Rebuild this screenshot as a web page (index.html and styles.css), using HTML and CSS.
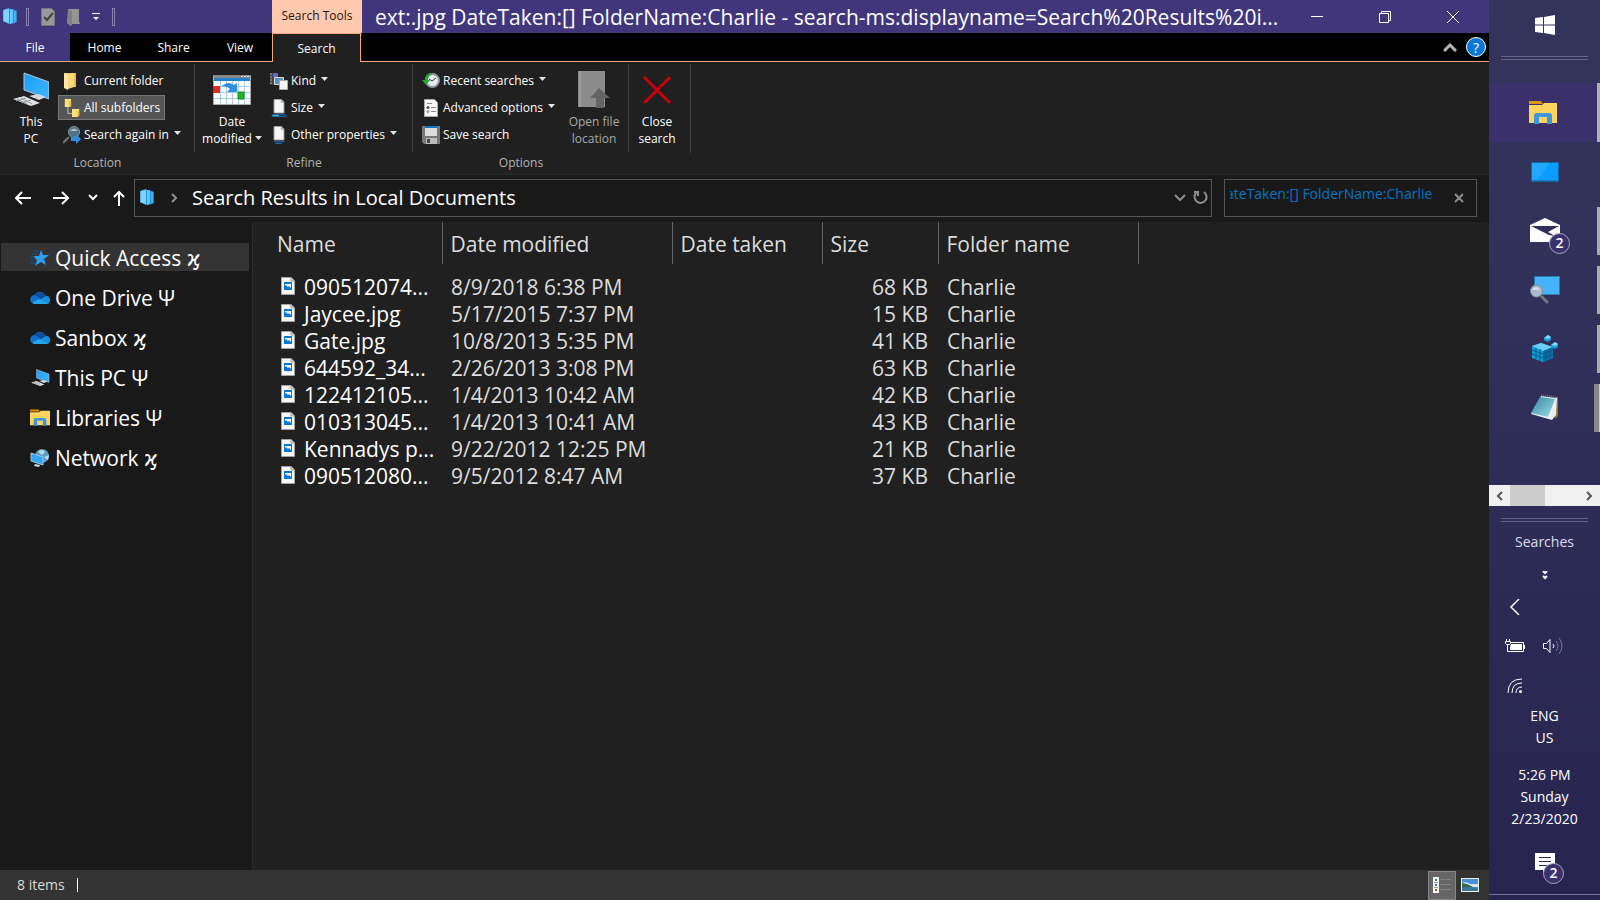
FILE: index.html
```html
<!DOCTYPE html>
<html lang="en">
<head>
<meta charset="UTF-8" />
<meta name="viewport" content="width=device-width, initial-scale=1" />
<title>Search Results in Local Documents</title>
<link rel="stylesheet" href="styles.css">
</head>
<body>

<!-- shared icons -->
<svg class="defs" aria-hidden="true">
  <defs>
    <linearGradient id="sky" x1="0" y1="0" x2="1" y2="1">
      <stop offset="0" stop-color="#18a0fb" /><stop offset="1" stop-color="#42b4ff" />
    </linearGradient>
    <linearGradient id="glass" x1="0" y1="0" x2="1" y2="1">
      <stop offset="0" stop-color="#2d88a4" /><stop offset="1" stop-color="#a5dce4" />
    </linearGradient>
  </defs>
  <symbol id="search-folder" viewBox="0 0 16 18">
    <path d="M1 2 7 0l1 1 3 0 1 1 3 1v12l-3 1-1 0-4 1-6-3z" fill="#3fb2ef" />
    <path d="M1 2 7 1v15l-6-2z" fill="#7cd4ff" />
    <path d="M7 1l1 0v16l-1 0zM11 1l1 1v15l-1 0z" fill="#1c8fd4" />
    <path d="M8 1l3 1v14l-3 1z" fill="#66c8fc" />
  </symbol>
  <symbol id="image-file" viewBox="0 0 14 18">
    <path d="M.5.5h9.500l3.500 3.500v13.500H.5z" fill="#f8f8f8" stroke="#a4a4a4" />
    <path d="M10 .5v3.500h3.500" fill="#ddd" stroke="#999" />
    <path d="M3 5h8v8H3z" fill="#0878d8" />
    <path d="M4 7h6v4l-2-2-1 1-2-2-1 1z" fill="#fff" />
  </symbol>
  <symbol id="cloud" viewBox="0 0 20 14">
    <path d="M5 13a4.500 4.500 0 0 1-.5-9A6.500 6.500 0 0 1 16 5a4 4 0 0 1-1 8z" fill="#0f6fc9" />
    <path d="M5 4a6.500 6.500 0 0 1 11 1L11 8z" fill="#0a4f9e" />
    <path d="M3 13l8-5 5-3a4 4 0 0 1 0 8z" fill="#1490df" />
    <path d="M2 12l7-4 9 5H5z" fill="#29a7ea" />
  </symbol>
  <symbol id="computer" viewBox="0 0 36 36">
    <path d="M11 1l25 9v17L11 18z" fill="url(#sky)" stroke="#b9c4cb" />
    <path d="M16 24l9-2 8 3-7 3z" fill="#d3dadd" />
    <path d="M0 27l11-3 16 7-9 3z" fill="#dfe3e6" />
    <path d="M4 27l10 5M8 26l11 6M3 29l10-3M9 31l9-3" stroke="#8f979c" />
  </symbol>
  <symbol id="libraries" viewBox="0 0 28 24">
    <path d="M0 0h12l2 3H0z" fill="#dd9706" />
    <path d="M0 4h13l2-2h13v20H0z" fill="#ffd45e" />
    <path d="M5 23v-8q0-3 3-3h12q3 0 3 3v8h-5v-7h-8v7z" fill="#3c97dc" />
  </symbol>
  <symbol id="page" viewBox="0 0 18 20">
    <path d="M3.500 1.500h8l3 3v12h-11z" fill="#f5f5f5" stroke="#aaa" />
    <path d="M11.500 1.500v3h3" fill="#ccc" stroke="#999" />
  </symbol>
  <symbol id="down" viewBox="0 0 7 4"><path d="M0 0h7L3.500 4z" fill="#e4e4e4" /></symbol>
</svg>

<main class="window">
  <header class="titlebar">
    <div class="quick-bar">
      <svg class="i16"><use href="#search-folder" /></svg>
      <span class="grip"></span>
      <button aria-label="Properties">
        <svg width="14" height="18" viewBox="0 0 14 18"><path d="M.5.5h10l3 3v14H.5z" fill="#989898" stroke="#777" /><path d="M3 9l3 3 6-7" fill="none" stroke="#444" stroke-width="2" /></svg>
      </button>
      <button aria-label="New folder">
        <svg width="13" height="18" viewBox="0 0 13 18"><path d="M1 1h11v12l1 3-8 0-1 2-4-3z" fill="#959595" /><path d="M1 1l4 2v14l-4-2z" fill="#808080" /></svg>
      </button>
      <button aria-label="Customize">
        <svg width="8" height="8" viewBox="0 0 8 8"><path d="M0 0h8v1H0zM1 4h6L4 7z" fill="#fff" /></svg>
      </button>
      <span class="grip"></span>
    </div>
    <div class="tools-tab">Search Tools</div>
    <h1>ext:.jpg DateTaken:[] FolderName:Charlie - search-ms:displayname=Search%20Results%20i...</h1>
    <div class="window-buttons">
      <button aria-label="Minimize"><svg width="12" height="12" viewBox="0 0 12 12"><path d="M0 5.500h12" stroke="#fff" /></svg></button>
      <button aria-label="Restore"><svg width="12" height="12" viewBox="0 0 12 12" fill="none" stroke="#fff"><path d="M.5 2.500h9v9h-9zM2.500 2.500v-2h9v9h-2" /></svg></button>
      <button aria-label="Close"><svg width="12" height="12" viewBox="0 0 12 12"><path d="M0 0l12 12M12 0 0 12" stroke="#fff" /></svg></button>
    </div>
  </header>

  <nav class="tabs">
    <button class="file">File</button>
    <button class="home">Home</button>
    <button>Share</button>
    <button>View</button>
    <button class="active">Search</button>
    <div class="tab-end">
      <button aria-label="Collapse ribbon"><svg width="14" height="9" viewBox="0 0 14 9"><path d="M1 8l6-6 6 6" fill="none" stroke="#b5b5b5" stroke-width="3" /></svg></button>
      <button class="help" aria-label="Help">?</button>
    </div>
  </nav>

  <section class="ribbon">
    <div class="group location">
      <div class="group-body">
        <button class="big">
          <svg width="36" height="36"><use href="#computer" /></svg>
          <span>This<br>PC</span>
        </button>
        <div class="stack">
          <button>
            <svg class="i18" viewBox="0 0 18 18"><path d="M1 1h12v14H5z" fill="#e9bd54" /><path d="M1 1l4 1v16l-4-2z" fill="#ffe9a3" /><path d="M5 2l6-1v14l-6 2z" fill="#fbd878" /></svg>
            Current folder
          </button>
          <button class="selected">
            <svg class="i18" viewBox="0 0 18 20"><path d="M4.500 9v7h5" fill="none" stroke="#ccc" /><path d="M1 0h7v8l-2 1H1zM9 11h8v7l-2 2H9z" fill="#ffe07c" /><path d="M6 2h2v6l-2 1zM15 13h2v6l-2 1z" fill="#e8b744" /></svg>
            All subfolders
          </button>
          <button>
            <svg class="i18" viewBox="0 0 18 18"><path d="M0 17l6-6" stroke="#777" stroke-width="2" /><circle cx="11" cy="6" r="5.500" fill="#4e7186" stroke="#8796a0" /><path d="M7 5q4-5 8 0" fill="#a9bdc8" /><path d="M8 11h5V8l5 5-5 5v-3H8z" fill="#2d8fe0" /></svg>
            Search again in <svg class="caret"><use href="#down" /></svg>
          </button>
        </div>
      </div>
      <p>Location</p>
    </div>

    <div class="group refine">
      <div class="group-body">
        <button class="big">
          <svg width="38" height="36" viewBox="0 0 38 36"><path d="M.5 3.500h37v29H.5z" fill="#fff" stroke="#aaa" /><path d="M1 3h36v3H1z" fill="#888" /><path d="M1 6h36v3H1z" fill="#2382ce" /><path d="M7.500 9v23M13.500 9v23M19.500 9v23M25.500 9v23M31.500 9v23M1 14.500h36M1 20.500h36M1 26.500h36" stroke="#a6cde6" /><path d="M0 14h7v7H0z" fill="#df2b22" /><path d="M25 20h6v7h-6z" fill="#1eb92b" stroke="#128c1b" /><path d="M8 15q7-7 13-2l3-2v9h-10l3-3q-4-4-9-2z" fill="#2f8fe0" /><path d="M28 4h2v1h-2zM31 4h2v1h-2zM34 4h2v1h-2z" fill="#eee" /></svg>
          <span>Date<br>modified <svg class="caret"><use href="#down" /></svg></span>
        </button>
        <div class="stack">
          <button>
            <svg class="i18" viewBox="0 0 18 18"><path d="M0 1h8v12H0z" fill="#3e4247" /><path d="M0 2h2M0 5h2M0 8h2M0 11h2" stroke="#aaa" /><path d="M3 1h5v4H3z" fill="#5968c8" /><path d="M4.500 5.500h9v7h-9z" fill="#5a91c1" stroke="#ddd" /><path d="M9.500 8.500h8v9h-8z" fill="#f4f4f4" stroke="#aaa" /></svg>
            Kind <svg class="caret"><use href="#down" /></svg>
          </button>
          <button>
            <svg class="i18" viewBox="0 0 18 20"><path d="M3.500.5h8l3 3v12h-11z" fill="#f5f5f5" stroke="#aaa" /><path d="M11.500.5v3h3" fill="#ccc" stroke="#999" /><path d="M1.500 17.500h15v2h-15z" fill="#123" stroke="#0a78d0" /><path d="M2 18h7v1H2z" fill="#7cc" /></svg>
            Size <svg class="caret"><use href="#down" /></svg>
          </button>
          <button>
            <svg class="i18" viewBox="0 0 18 20"><path d="M3.500.5h8l3 3v12h-11z" fill="#f5f5f5" stroke="#aaa" /><path d="M11.500.5v3h3" fill="#ccc" stroke="#999" /><path d="M3 17.500h12M5 19.500h7" stroke="#1680d6" /></svg>
            Other properties <svg class="caret"><use href="#down" /></svg>
          </button>
        </div>
      </div>
      <p>Refine</p>
    </div>

    <div class="group options">
      <div class="group-body">
        <div class="stack">
          <button>
            <svg class="i18" viewBox="0 0 18 18"><circle cx="10.500" cy="8.500" r="6.500" fill="#e9edef" stroke="#8a979e" stroke-width="2" /><path d="M7 7l3 2 4-3" stroke="#333" fill="none" /><path d="M10 1Q3 1 3 8H0l4 5 4-5H6q0-4 4-6z" fill="#29a63a" /></svg>
            Recent searches <svg class="caret"><use href="#down" /></svg>
          </button>
          <button>
            <svg class="i18" viewBox="0 0 18 18"><path d="M2.500.5h10l3 3v14h-13z" fill="#fafafa" stroke="#aaa" /><path d="M5 4.500h5M9 8.500h5M9 12.500h5" stroke="#888" /><circle cx="6" cy="8.500" r="1.500" fill="#555" /><circle cx="6" cy="12.500" r="1" fill="none" stroke="#777" /></svg>
            Advanced options <svg class="caret"><use href="#down" /></svg>
          </button>
          <button>
            <svg class="i18" viewBox="0 0 18 18"><path d="M0 0h18v18H2l-2-2z" fill="#777" /><path d="M3 0h12v10H3z" fill="#ddd" /><path d="M3 0h12v2H3z" fill="#0878d0" /><path d="M4 12h11v6H4z" fill="#bbb" /><path d="M5 13h3v4H5z" fill="#444" /></svg>
            Save search
          </button>
        </div>
        <button class="big" disabled>
          <svg width="32" height="38" viewBox="0 0 32 38"><path d="M0 0h27v36H0z" fill="#8c8c8c" /><path d="M2 0v36" stroke="#aaa" /><path d="M21 17l11 10h-6v10h-8V27h-6z" fill="#646464" /></svg>
          <span>Open file<br>location</span>
        </button>
      </div>
      <p>Options</p>
    </div>

    <div class="group close">
      <div class="group-body">
        <button class="big">
          <svg width="30" height="36" viewBox="0 0 30 36"><path d="M2 5l26 26M28 5 2 31" stroke="#c8000c" stroke-width="3" /></svg>
          <span>Close<br>search</span>
        </button>
      </div>
    </div>
  </section>

  <section class="address-row">
    <button aria-label="Back"><svg width="16" height="14" viewBox="0 0 16 14"><path d="M16 7H2M7 1 1 7l6 6" /></svg></button>
    <button aria-label="Forward"><svg width="16" height="14" viewBox="0 0 16 14"><path d="M0 7h14M9 1l6 6-6 6" /></svg></button>
    <button class="narrow" aria-label="Recent locations"><svg width="10" height="7" viewBox="0 0 10 7"><path d="M1 1l4 4 4-4" /></svg></button>
    <button class="narrow" aria-label="Up"><svg width="12" height="16" viewBox="0 0 12 16"><path d="M6 16V2M1 7l5-5 5 5" /></svg></button>
    <div class="address">
      <svg class="i16"><use href="#search-folder" /></svg>
      <svg class="crumb" width="6" height="10" viewBox="0 0 6 10"><path d="M1 1l4 4-4 4" /></svg>
      <span>Search Results in Local Documents</span>
      <button aria-label="Previous locations"><svg width="12" height="8" viewBox="0 0 12 8"><path d="M1 1l5 5 5-5" /></svg></button>
      <button aria-label="Refresh"><svg width="15" height="15" viewBox="0 0 15 15"><path d="M3 3a6 6 0 1 0 8-1M1 2h4v4" /></svg></button>
    </div>
    <div class="search-box">
      <input type="text" aria-label="Search" value="ateTaken:[] FolderName:Charlie">
      <button aria-label="Clear search"><svg width="10" height="10" viewBox="0 0 10 10"><path d="M1 1l8 8M9 1 1 9" /></svg></button>
    </div>
  </section>

  <div class="content">
    <aside class="nav-pane">
      <a href="#" class="current"><svg class="i20" viewBox="0 0 20 18"><path d="M11 1l2 5 6 0-5 4 2 6-5-3-6 4 2-6-4-4h6z" fill="#2b9df0" /><path d="M3 2h6M1 5h7M0 8h5M1 11h5M0 14h5" stroke="#14547f" /></svg><span>Quick Access <span class="kai">ϗ</span></span></a>
      <a href="#"><svg class="i20"><use href="#cloud" /></svg>One Drive Ψ</a>
      <a href="#"><svg class="i20"><use href="#cloud" /></svg><span>Sanbox <span class="kai">ϗ</span></span></a>
      <a href="#"><svg class="i20"><use href="#computer" /></svg>This PC Ψ</a>
      <a href="#"><svg class="i20"><use href="#libraries" /></svg>Libraries Ψ</a>
      <a href="#"><svg class="i20" viewBox="0 0 20 18"><circle cx="12" cy="7" r="7" fill="#5b9fbe" /><path d="M8 3q4-4 7 0l-3 3zM14 8l5-2-1 5z" fill="#b8dce6" /><path d="M1 4l12 4v8L1 12z" fill="#35a5f5" stroke="#9cc4da" /><path d="M5 15l5 1-1 2-5-1z" fill="#cfd8dd" /></svg><span>Network <span class="kai">ϗ</span></span></a>
    </aside>

    <div class="files">
      <table>
        <colgroup>
          <col class="c-name"><col class="c-modified"><col class="c-taken"><col class="c-size"><col class="c-folder">
        </colgroup>
        <thead>
          <tr><th>Name</th><th>Date modified</th><th>Date taken</th><th>Size</th><th>Folder name</th></tr>
        </thead>
        <tbody>
          <tr><td><svg><use href="#image-file" /></svg>090512074...</td><td>8/9/2018 6:38 PM</td><td></td><td>68 KB</td><td>Charlie</td></tr>
          <tr><td><svg><use href="#image-file" /></svg>Jaycee.jpg</td><td>5/17/2015 7:37 PM</td><td></td><td>15 KB</td><td>Charlie</td></tr>
          <tr><td><svg><use href="#image-file" /></svg>Gate.jpg</td><td>10/8/2013 5:35 PM</td><td></td><td>41 KB</td><td>Charlie</td></tr>
          <tr><td><svg><use href="#image-file" /></svg>644592_34...</td><td>2/26/2013 3:08 PM</td><td></td><td>63 KB</td><td>Charlie</td></tr>
          <tr><td><svg><use href="#image-file" /></svg>122412105...</td><td>1/4/2013 10:42 AM</td><td></td><td>42 KB</td><td>Charlie</td></tr>
          <tr><td><svg><use href="#image-file" /></svg>010313045...</td><td>1/4/2013 10:41 AM</td><td></td><td>43 KB</td><td>Charlie</td></tr>
          <tr><td><svg><use href="#image-file" /></svg>Kennadys p...</td><td>9/22/2012 12:25 PM</td><td></td><td>21 KB</td><td>Charlie</td></tr>
          <tr><td><svg><use href="#image-file" /></svg>090512080...</td><td>9/5/2012 8:47 AM</td><td></td><td>37 KB</td><td>Charlie</td></tr>
        </tbody>
      </table>
    </div>
  </div>

  <footer class="statusbar">
    <span class="count">8 items</span>
    <div class="views">
      <button class="on" aria-label="Details"><svg width="18" height="16" viewBox="0 0 18 16"><path d="M0 0h6v16H0z" fill="#f4f4f4" /><path d="M1 5.500h4M1 10.500h4" stroke="#999" /><path d="M2 2h2v2H2z" fill="#387" /><path d="M2 7h2v2H2z" fill="#37b" /><path d="M2 12h2v2H2z" fill="#c32" /><path d="M7 2.500h5M13 2.500h5M7 7.500h5M13 7.500h5M7 12.500h5M13 12.500h5" stroke="#858585" /></svg></button>
      <button aria-label="Large icons"><svg width="18" height="14" viewBox="0 0 18 14"><path d="M0 0h18v14H0z" fill="#eee" /><path d="M1 1h16v12H1z" fill="#4a90d8" /><path d="M1 5q4-2 8 1l8 0v3H1z" fill="#d2e8f5" /><path d="M1 5l5 1 6 3-11 1z" fill="#326b4b" /><path d="M1 10q8-2 16 0v3H1z" fill="#387994" /></svg></button>
    </div>
  </footer>
</main>

<aside class="taskbar">
  <button class="start" aria-label="Start"><svg width="20" height="20" viewBox="0 0 20 20" fill="#fff"><path d="M0 3l8-1v7.500H0zM9 2l11-2v9.500H9zM0 10.500h8V18l-8-1zM9 10.500h11V20L9 18z" /></svg></button>
  <hr>
  <div class="apps">
    <button class="active" aria-label="File Explorer"><svg width="28" height="24"><use href="#libraries" /></svg></button>
    <button aria-label="Desktop"><svg width="28" height="20" viewBox="0 0 28 20"><path d="M.5.5h27v19H.5z" fill="#0a9cff" stroke="#1468a0" /><path d="M1 1h18L6 18H1z" fill="#22a8ff" /><path d="M1 18.500h26" stroke="#1878b5" /></svg></button>
    <button class="open" aria-label="Mail, 2 new">
      <svg width="30" height="26" viewBox="0 0 30 26"><path d="M0 7 15 0l15 7v17H0z" fill="#fff" /><path d="M1 8h28L18 14l7 4-6-1z" fill="#302f58" /></svg>
      <span class="badge">2</span>
    </button>
    <button class="open" aria-label="Search"><svg width="30" height="28" viewBox="0 0 30 28"><path d="M4.500.5h25v18h-25z" fill="#45b3fa" stroke="#277da7" /><path d="M11 20l7 7" stroke="#777" stroke-width="3" /><circle cx="6.500" cy="15" r="6" fill="#adb9ce" stroke="#7f8a98" /><path d="M2 14q4-6 8 0" fill="#d8deea" /></svg></button>
    <button class="open" aria-label="Registry Editor"><svg width="26" height="28" viewBox="0 0 26 28"><path d="M0 11l9-3 12 4v11l-10 4-11-4z" fill="#139ad2" /><path d="M0 11l9-3 12 4-10 4z" fill="#69cef3" /><path d="M11 16l10-4v11l-10 4z" fill="#0b6ea8" /><path d="M0 15l11 4 10-4M0 19l11 4 10-4M4 13v11M8 14v12M14 15v11M18 13v11" stroke="#0a5788" fill="none" /><path d="M12 3l4-3 3 2v3l-3 2-4-2zM19 10l4-3 3 2v3l-3 2-4-2z" fill="#2299d4" /><path d="M12 3l4-3 3 2-3 2zM19 10l4-3 3 2-3 2z" fill="#7ad9f8" /></svg></button>
    <button class="open many" aria-label="Notepad"><svg width="28" height="27" viewBox="0 0 28 27"><path d="M25 3h2v19l-3 3z" fill="#9a7130" /><path d="M10 2l16 2-1 17-4 5L0 20z" fill="#e5f0ef" /><path d="M9 3l15 2-7 18L0 19z" fill="url(#glass)" /><path d="M10 1l16 2" stroke="#666" stroke-width="2" stroke-dasharray="1 1" /></svg></button>
  </div>
  <div class="scroller">
    <button aria-label="Scroll left"><svg width="7" height="10" viewBox="0 0 7 10"><path d="M6 1 2 5l4 4" /></svg></button>
    <span class="thumb"></span>
    <button aria-label="Scroll right"><svg width="7" height="10" viewBox="0 0 7 10"><path d="M1 1l4 4-4 4" /></svg></button>
  </div>
  <hr>
  <div class="toolbar-name">Searches</div>
  <button class="more" aria-label="More"><svg width="6" height="9" viewBox="0 0 6 9"><path d="M1 0l2 2 2-2M1 5l2 2 2-2" fill="none" stroke="#fff" stroke-width="2" /></svg></button>
  <div class="tray">
    <button aria-label="Hidden icons"><svg width="20" height="16" viewBox="0 0 20 16"><path d="M14 0 6 8l8 8" stroke-width="1.500" /></svg></button>
    <span></span>
    <button aria-label="Battery"><svg width="20" height="14" viewBox="0 0 20 14"><path d="M6 3.500h12.500v9h-16V8" /><path d="M6 5h11v6H5V8z" fill="#fff" stroke="none" /><path d="M19.500 6v4M1.500 0v2M4.500 0v2M.5 2.500h5v2l-1 1h-3l-1-1zM2.500 6v6" /></svg></button>
    <button aria-label="Volume"><svg width="20" height="18" viewBox="0 0 20 18"><path d="M.5 6.500h3l3.500-4v13l-3.500-4h-3z" /><path d="M10 7q2 2 0 4" /><path d="M13 4q4 5 0 10M16 1q6 8 0 16" stroke="#77759b" /></svg></button>
    <button aria-label="Network"><svg width="16" height="16" viewBox="0 0 16 16"><path d="M1 15Q1 1 15 1M5 15Q5 5 15 5M9 15q0-6 6-6" /><circle cx="13.500" cy="13.500" r="1.500" fill="#fff" stroke="none" /></svg></button>
  </div>
  <div class="lang">ENG<br>US</div>
  <div class="clock">5:26 PM<br>Sunday<br>2/23/2020</div>
  <button class="action-center" aria-label="Notifications, 2 new">
    <svg width="20" height="20" viewBox="0 0 20 20"><path d="M0 0h20v17h-9l-3 3v-3H0z" fill="#fff" /><path d="M4 4.500h12M4 8.500h12M4 12.500h9" stroke="#2a2950" /></svg>
    <span class="badge">2</span>
  </button>
</aside>

</body>
</html>
```
FILE: styles.css
```css
* {
  box-sizing: border-box;
}
body {
  margin: 0;
  display: flex;
  height: 100vh;
  overflow: hidden;
  font-family: "Open Sans", "Noto Sans", "DejaVu Sans", sans-serif;
  font-size: 12px;
  color: #fff;
  background: #202020;
}
button {
  font: inherit;
  color: inherit;
  background: none;
  border: none;
  padding: 0;
  display: flex;
  align-items: center;
  justify-content: center;
}
svg {
  flex: none;
}
.defs {
  position: absolute;
  width: 0;
  height: 0;
}
.i16 {
  width: 16px;
  height: 17px;
}
.i18 {
  width: 18px;
  height: 18px;
}
.i20 {
  width: 20px;
  height: 18px;
}
.caret {
  width: 7px;
  height: 4px;
}

.window {
  flex: 1;
  min-width: 0;
  display: flex;
  flex-direction: column;
}

/* title bar */
.titlebar {
  display: flex;
  height: 33px;
  padding-right: 2px;
  background: #41367c;
}
.quick-bar {
  width: 272px;
  display: flex;
  align-items: center;
  gap: 12px;
  padding-left: 2px;
}
.quick-bar .i16 {
  margin-right: -4px;
}
.grip {
  width: 3px;
  height: 18px;
  border: 1px solid #8881ae;
}
.tools-tab {
  width: 90px;
  background: #ffc9ae;
  color: #1c1410;
  text-align: center;
  line-height: 31px;
}
.titlebar h1 {
  flex: 1;
  margin: 0;
  padding-left: 13px;
  font-size: 21px;
  font-weight: 400;
  line-height: 34px;
  white-space: nowrap;
  overflow: hidden;
}
.window-buttons {
  display: flex;
}
.window-buttons button {
  width: 68px;
}

/* ribbon tabs */
.tabs {
  display: flex;
  height: 29px;
  background: #000;
}
.tabs button {
  width: 64px;
  border-bottom: 1px solid #f7a67c;
}
.tabs .file {
  width: 70px;
  background: #41367c;
}
.tabs .home {
  width: 69px;
}
.tabs .home + button {
  width: 69px;
}
.tabs .active {
  width: 89px;
  background: #202020;
  border: 1px solid #f7a67c;
  border-bottom: none;
}
.tab-end {
  flex: 1;
  display: flex;
  justify-content: flex-end;
  align-items: center;
  gap: 9px;
  padding-right: 3px;
  border-bottom: 1px solid #f7a67c;
}
.tab-end button {
  width: auto;
  border: none;
}
.tab-end .help {
  width: 20px;
  height: 20px;
  border: 1px solid #fff;
  border-radius: 50%;
  background: #0878d7;
  font-size: 14px;
}

/* ribbon */
.ribbon {
  display: flex;
  height: 113px;
  border-bottom: 1px solid #2b2b2b;
}
.group {
  display: flex;
  flex-direction: column;
  padding-top: 2px;
}
.group-body {
  display: flex;
  height: 89px;
  padding: 4px 0 0 4px;
  border-right: 1px solid #414141;
}
.group p {
  margin: 0;
  line-height: 22px;
  text-align: center;
  color: #b4b4b4;
}
.location {
  width: 195px;
}
.refine {
  width: 218px;
}
.options {
  width: 216px;
}
.close {
  width: 62px;
}
.close .group-body {
  padding-left: 1px;
}
.stack {
  display: flex;
  flex-direction: column;
  align-items: flex-start;
  gap: 2px;
}
.stack button {
  height: 25px;
  padding: 0 4px;
  gap: 3px;
  border: 1px solid transparent;
  white-space: nowrap;
}
.stack .caret {
  margin: 0 0 3px 2px;
}
.stack .selected {
  background: #555;
  border-color: #777;
}
.big {
  width: 54px;
  flex-direction: column;
  justify-content: flex-start;
  gap: 4px;
  padding-top: 3px;
  line-height: 17px;
  white-space: nowrap;
}
.big > svg {
  height: 38px;
}
.refine .big {
  width: 66px;
}
.options .big {
  margin-left: auto;
  width: 76px;
  color: #a8a8a8;
}
.big .caret {
  margin-bottom: 3px;
}

/* address row */
.address-row {
  display: flex;
  align-items: center;
  height: 47px;
  padding: 0 12px 2px 4px;
  background: #191919;
}
.address-row button {
  width: 38px;
}
.address-row .narrow {
  width: 26px;
}
.address-row path {
  fill: none;
  stroke: #fff;
  stroke-width: 2;
}
.address,
.search-box {
  display: flex;
  align-items: center;
  height: 38px;
  border: 1px solid #555;
}
.address {
  flex: 1;
  margin: 0 12px 0 2px;
  padding-left: 4px;
  font-size: 20px;
}
.address span {
  flex: 1;
  margin-left: 15px;
}
.address .crumb {
  margin-left: 16px;
}
.address button {
  width: 21px;
}
.address .crumb path,
.address button path,
.search-box path {
  stroke: #8f8f8f;
}
.search-box {
  width: 253px;
}
.search-box input {
  flex: 1;
  min-width: 0;
  margin: 0 0 8px 5px;
  padding: 0;
  border: none;
  background: none;
  color: #0873c4;
  font: inherit;
  font-size: 14px;
  text-indent: -4px;
}
.search-box button {
  width: 34px;
}

/* navigation pane */
.content {
  flex: 1;
  min-height: 0;
  display: flex;
}
.nav-pane {
  width: 253px;
  padding: 21px 3px 0 1px;
  background: #191919;
  border-right: 1px solid #2b2b2b;
}
.nav-pane a {
  display: flex;
  align-items: center;
  gap: 5px;
  height: 28px;
  margin-bottom: 12px;
  padding: 2px 0 0 29px;
  color: #fff;
  font-size: 21px;
  text-decoration: none;
}
.nav-pane .current {
  background: #333;
}
.kai {
  font-family: "DejaVu Sans", sans-serif;
}

/* file list */
.files {
  flex: 1;
  padding-left: 16px;
}
table {
  table-layout: fixed;
  width: 869px;
  border-collapse: collapse;
  font-size: 21px;
  color: #dcdcdc;
}
.c-name { width: 173px; }
.c-modified { width: 230px; }
.c-taken { width: 150px; }
.c-size { width: 116px; }
.c-folder { width: 200px; }
th {
  height: 42px;
  padding: 2px 8px 0;
  font-weight: 400;
  text-align: left;
  border-right: 1px solid #636363;
}
tbody::before {
  content: "";
  display: block;
  height: 10px;
}
td {
  height: 27px;
  padding: 0 9px;
  line-height: 27px;
  white-space: nowrap;
}
td:first-child {
  color: #fff;
}
td:nth-child(4) {
  text-align: right;
  padding-right: 10px;
}
td svg {
  width: 14px;
  height: 18px;
  margin: 0 9px 0 3px;
}

/* status bar */
.statusbar {
  display: flex;
  justify-content: space-between;
  align-items: center;
  height: 30px;
  padding: 0 5px 0 17px;
  background: #333;
  font-size: 14px;
}
.count {
  padding-right: 12px;
  border-right: 1px solid #fff;
  line-height: 14px;
  color: #dcdcdc;
}
.views {
  display: flex;
}
.views button {
  width: 28px;
  height: 29px;
}
.views .on {
  background: #666;
  border: 1px solid #858585;
}

/* taskbar */
.taskbar {
  width: 111px;
  display: flex;
  flex-direction: column;
  background: linear-gradient(#33345c, #302f59 40%, #272550);
  font-size: 14px;
  text-align: center;
}
.taskbar > * {
  flex: none;
}
.start {
  height: 50px;
}
.taskbar hr {
  height: 4px;
  margin: 6px 12px 0;
  border: solid #65648b;
  border-width: 1px 0;
}
.apps {
  height: 425px;
  padding-top: 23px;
}
.apps button {
  position: relative;
  width: 100%;
  height: 59px;
}
.apps .active {
  background: #3a316a;
  border-right: 3px solid #b0b0b0;
}
.apps .open::after {
  content: "";
  position: absolute;
  right: 0;
  top: 6px;
  width: 3px;
  height: 48px;
  background: #aaa;
}
.apps .many::after {
  width: 5px;
  background: #888;
  border-right: 1px solid #ccc;
}
.badge {
  position: absolute;
  width: 21px;
  height: 21px;
  border: 1px solid #a7a3c6;
  border-radius: 50%;
  background: #3b326c;
  font-weight: 600;
  line-height: 18px;
}
.apps .badge {
  left: 60px;
  top: 32px;
}
.scroller {
  display: flex;
  height: 21px;
  margin-bottom: 6px;
  background: #f0f0f0;
}
.scroller button {
  width: 21px;
}
.scroller path {
  fill: none;
  stroke: #555;
  stroke-width: 2;
}
.thumb {
  width: 35px;
  margin-right: auto;
  background: #cdcdcd;
}
.toolbar-name {
  margin-top: 10px;
  line-height: 20px;
  color: #dcdcea;
}
.more {
  height: 46px;
}
.tray {
  display: grid;
  grid-template-columns: 38px 38px;
  grid-template-rows: 17px 18px 18px;
  row-gap: 22px;
  padding-left: 7px;
}
.tray svg {
  fill: none;
  stroke: #fff;
}
.lang,
.clock {
  line-height: 22px;
}
.lang {
  margin-top: 10px;
}
.clock {
  margin-top: 15px;
}
.action-center {
  position: relative;
  height: 64px;
  margin-top: auto;
  margin-bottom: 5px;
  border-bottom: 1px solid #77759b;
}
.action-center .badge {
  left: 54px;
  top: 32px;
}
```
